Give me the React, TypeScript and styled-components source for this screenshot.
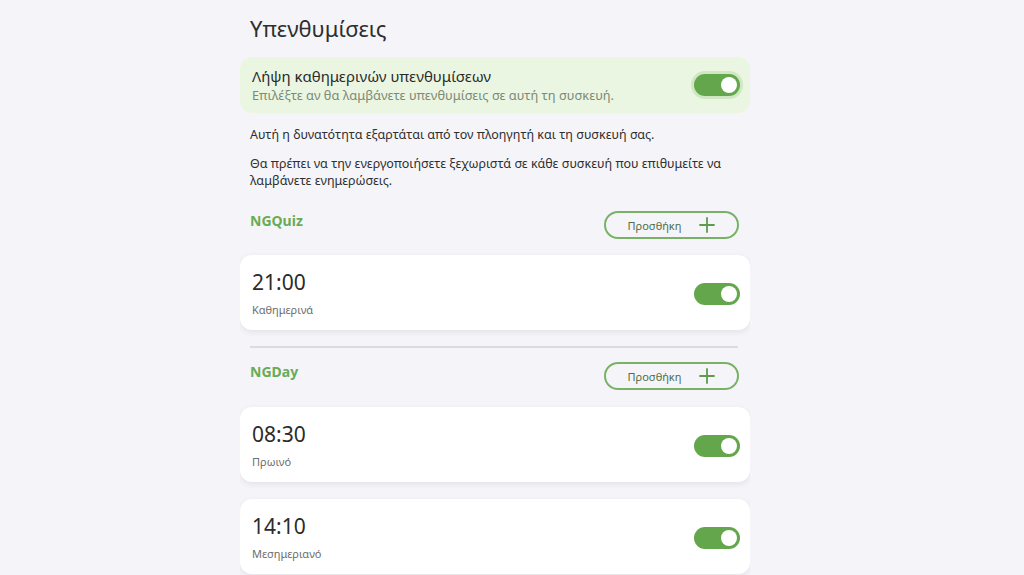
import React from 'react';
import styled, { createGlobalStyle } from 'styled-components';

const GlobalStyle = createGlobalStyle`
  body {
    margin: 0;
    background: #f5f5f9;
    font-family: "Noto Sans", "Open Sans", sans-serif;
    color: #2b2b2b;
  }
`;

const Page = styled.div`
  width: 510px;
  margin-left: 240px;
  padding-top: 14px;
  height: 575px;
  overflow: hidden;
`;

const Title = styled.h1`
  margin: 0 0 15px 10px;
  font-size: 22px;
  line-height: 28px;
  font-weight: 400;
  color: #2e2e2e;
`;

const Banner = styled.div`
  display: flex;
  align-items: center;
  justify-content: space-between;
  background: #eaf6e2;
  border-radius: 12px;
  padding: 9px 10px 9px 12px;
`;

const BannerTitle = styled.div`
  font-size: 15px;
  line-height: 20px;
  color: #2b2b2b;
`;

const BannerSub = styled.div`
  font-size: 12.8px;
  line-height: 18px;
  color: #7c8a76;
`;

const Track = styled.div<{ $halo?: boolean }>`
  position: relative;
  width: 46px;
  height: 22px;
  border-radius: 11px;
  background: #63a64b;
  flex-shrink: 0;
  box-shadow: ${p => (p.$halo ? '0 0 0 3px #cfe8c3' : 'none')};
  &::after {
    content: '';
    position: absolute;
    right: 3px;
    top: 3px;
    width: 16px;
    height: 16px;
    border-radius: 50%;
    background: #fff;
  }
`;

const Text = styled.p<{ $top: number }>`
  margin: ${p => p.$top}px 10px 0 10px;
  font-size: 12.5px;
  line-height: 17px;
  color: #2f2f2f;
`;

const SectionHead = styled.div<{ $top: number }>`
  display: flex;
  justify-content: space-between;
  align-items: flex-start;
  margin: ${p => p.$top}px 11px 0 10px;
`;

const SectionName = styled.div`
  padding-top: 1px;
  font-size: 14px;
  line-height: 18px;
  font-weight: 700;
  color: #6aab55;
`;

const AddButton = styled.button`
  display: flex;
  align-items: center;
  justify-content: center;
  gap: 18px;
  width: 135px;
  height: 28px;
  border: 2px solid #79b267;
  border-radius: 14px;
  background: transparent;
  font-family: inherit;
  font-size: 11px;
  color: #4f6e47;
  padding: 0;
  svg {
    display: block;
  }
`;

const Card = styled.div<{ $top: number }>`
  display: flex;
  align-items: center;
  justify-content: space-between;
  margin-top: ${p => p.$top}px;
  background: #fff;
  border-radius: 12px;
  padding: 14px 10px 12px 12px;
  box-shadow: 0 2px 6px rgba(0, 0, 0, 0.08);
`;

const Time = styled.div`
  font-size: 21px;
  line-height: 26px;
  color: #2b2b2b;
`;

const Label = styled.div`
  margin-top: 7px;
  font-size: 11px;
  line-height: 16px;
  color: #6d6d6d;
`;

const Divider = styled.hr`
  margin: 16px 12px 0 10px;
  border: none;
  height: 2px;
  background: #dcdcdf;
`;

const Plus = () => (
  <svg width="16" height="16" viewBox="0 0 16 16">
    <path d="M8 1v14M1 8h14" stroke="#5f9a4f" strokeWidth="1.8" strokeLinecap="round" />
  </svg>
);

const Reminder = ({ time, label, top }: { time: string; label: string; top: number }) => (
  <Card $top={top}>
    <div>
      <Time>{time}</Time>
      <Label>{label}</Label>
    </div>
    <Track />
  </Card>
);

const App = () => {
  return (
    <>
      <GlobalStyle />
      <Page>
        <Title>Υπενθυμίσεις</Title>
        <Banner>
          <div>
            <BannerTitle>Λήψη καθημερινών υπενθυμίσεων</BannerTitle>
            <BannerSub>Επιλέξτε αν θα λαμβάνετε υπενθυμίσεις σε αυτή τη συσκευή.</BannerSub>
          </div>
          <Track $halo />
        </Banner>
        <Text $top={13}>Αυτή η δυνατότητα εξαρτάται από τον πλοηγητή και τη συσκευή σας.</Text>
        <Text $top={12}>
          Θα πρέπει να την ενεργοποιήσετε ξεχωριστά σε κάθε συσκευή που επιθυμείτε να λαμβάνετε ενημερώσεις.
        </Text>
        <SectionHead $top={22}>
          <SectionName>NGQuiz</SectionName>
          <AddButton>
            Προσθήκη <Plus />
          </AddButton>
        </SectionHead>
        <Reminder time="21:00" label="Καθημερινά" top={16} />
        <Divider />
        <SectionHead $top={14}>
          <SectionName>NGDay</SectionName>
          <AddButton>
            Προσθήκη <Plus />
          </AddButton>
        </SectionHead>
        <Reminder time="08:30" label="Πρωινό" top={17} />
        <Reminder time="14:10" label="Μεσημεριανό" top={17} />
      </Page>
    </>
  );
};

export default App;
